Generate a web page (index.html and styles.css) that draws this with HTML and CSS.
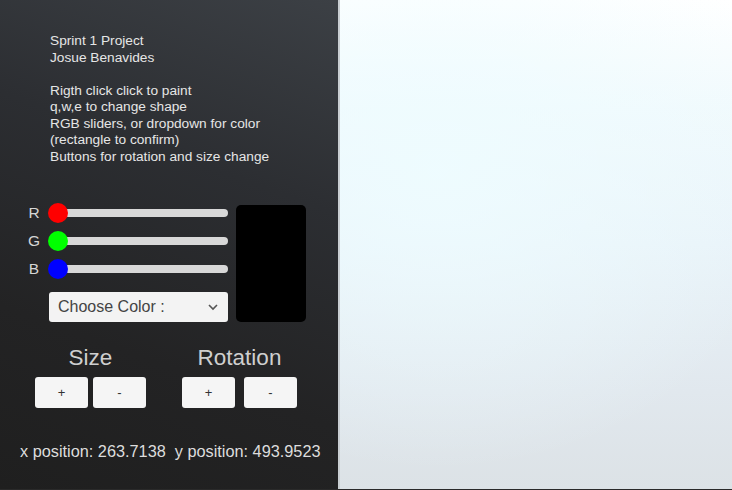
FILE: index.html
```html
<!DOCTYPE html>
<html lang="en">

<head>
  <meta charset="UTF-8">
  <meta name="viewport" content="width=device-width, initial-scale=1.0">
  <title>Sprint 1 Project</title>
  <link rel="stylesheet" href="styles.css">
</head>

<body>
  <div id="app">
    <!-- control panel -->
    <div id="panel">
      <div class="info">
        <p>Sprint 1 Project<br>Josue Benavides</p>
        <p>Rigth click click to paint<br>q,w,e to change shape<br>RGB sliders, or dropdown for color<br>(rectangle to confirm)<br>Buttons for rotation and size change</p>
      </div>

      <div class="color-controls">
        <div class="sliders">
          <div class="slider-row">
            <span class="slider-label">R</span>
            <div class="track"><span class="knob red"></span></div>
          </div>
          <div class="slider-row">
            <span class="slider-label">G</span>
            <div class="track"><span class="knob green"></span></div>
          </div>
          <div class="slider-row">
            <span class="slider-label">B</span>
            <div class="track"><span class="knob blue"></span></div>
          </div>
          <div class="dropdown">
            <span>Choose Color :</span>
            <svg width="12" height="8" viewBox="0 0 12 8">
              <path d="M2 2 L6 6 L10 2" fill="none" stroke="#555" stroke-width="1.6"/>
            </svg>
          </div>
        </div>
        <div class="preview"></div>
      </div>

      <div class="transform-controls">
        <div class="group">
          <div class="group-title">Size</div>
          <div class="buttons">
            <button class="btn">+</button>
            <button class="btn">-</button>
          </div>
        </div>
        <div class="group group-wide">
          <div class="group-title">Rotation</div>
          <div class="buttons">
            <button class="btn">+</button>
            <button class="btn">-</button>
          </div>
        </div>
      </div>

      <div class="position">x position: 263.7138&nbsp; y position: 493.9523</div>
    </div>

    <!-- canvas -->
    <div id="canvas"></div>
  </div>
</body>

</html>
```

FILE: styles.css
```css
/* page */
body {
  margin: 0;
  font-family: "Liberation Sans", Arial, sans-serif;
}

#app {
  display: flex;
  width: 732px;
  height: 490px;
  overflow: hidden;
  border-bottom: 1px solid #2a2a2a;
  box-sizing: border-box;
}

/* left panel */
#panel {
  width: 338px;
  flex-shrink: 0;
  background: linear-gradient(200deg, #3c4045 0%, #2c2e32 35%, #232324 70%, #1f1f1f 100%);
  border-right: 2px solid #c9ced2;
  box-sizing: content-box;
}

.info {
  padding: 33px 0 0 50px;
  color: #e6e6e6;
  font-size: 13.7px;
  line-height: 16.5px;
}

.info p {
  margin: 0 0 16.5px 0;
}

/* sliders + preview */
.color-controls {
  display: flex;
  margin: 38px 0 0 28px;
}

.sliders {
  width: 200px;
}

.slider-row {
  display: flex;
  align-items: center;
  height: 20px;
  margin-bottom: 8px;
}

.slider-label {
  width: 12px;
  color: #d6d6d6;
  font-size: 15.5px;
  text-align: center;
}

.track {
  position: relative;
  margin-left: 18px;
  width: 170px;
  height: 8px;
  background: #d8d8d8;
  border-radius: 4px;
}

.knob {
  position: absolute;
  left: -10px;
  top: -6px;
  width: 20px;
  height: 20px;
  border-radius: 50%;
}

.red {
  background: #ff0000;
}

.green {
  background: #00ff00;
}

.blue {
  background: #0000ff;
}

.dropdown {
  display: flex;
  align-items: center;
  justify-content: space-between;
  margin: 13px 0 0 21px;
  width: 179px;
  height: 30px;
  padding: 0 9px;
  box-sizing: border-box;
  background: #f3f3f3;
  border-radius: 3px;
  color: #444;
  font-size: 16px;
}

.preview {
  margin: 2px 0 0 8px;
  width: 70px;
  height: 117px;
  background: #000;
  border-radius: 5px;
}

/* size / rotation */
.transform-controls {
  display: flex;
  margin: 22px 0 0 35px;
  gap: 36px;
}

.group-title {
  color: #cfcfcf;
  font-size: 22.5px;
  line-height: 26px;
  padding-top: 1px;
  text-align: center;
  height: 32px;
}

.buttons {
  display: flex;
  gap: 5px;
}

.group-wide .buttons {
  gap: 9px;
}

.btn {
  width: 53px;
  height: 31px;
  border: none;
  border-radius: 3px;
  background: #f5f5f5;
  color: #333;
  font-family: "Liberation Sans", Arial, sans-serif;
  font-size: 13px;
  padding: 0;
}

.position {
  margin: 34px 0 0 20px;
  color: #dddddd;
  font-size: 16.3px;
}

/* right canvas */
#canvas {
  flex: 1;
  background:
    radial-gradient(ellipse 360px 300px at 25% 35%, rgba(238, 252, 255, 0.9), rgba(238, 252, 255, 0) 100%),
    linear-gradient(180deg, #ffffff 0%, #f1fafd 22%, #e9f3f9 50%, #e1e8ee 80%, #dce2e6 100%);
}
```
